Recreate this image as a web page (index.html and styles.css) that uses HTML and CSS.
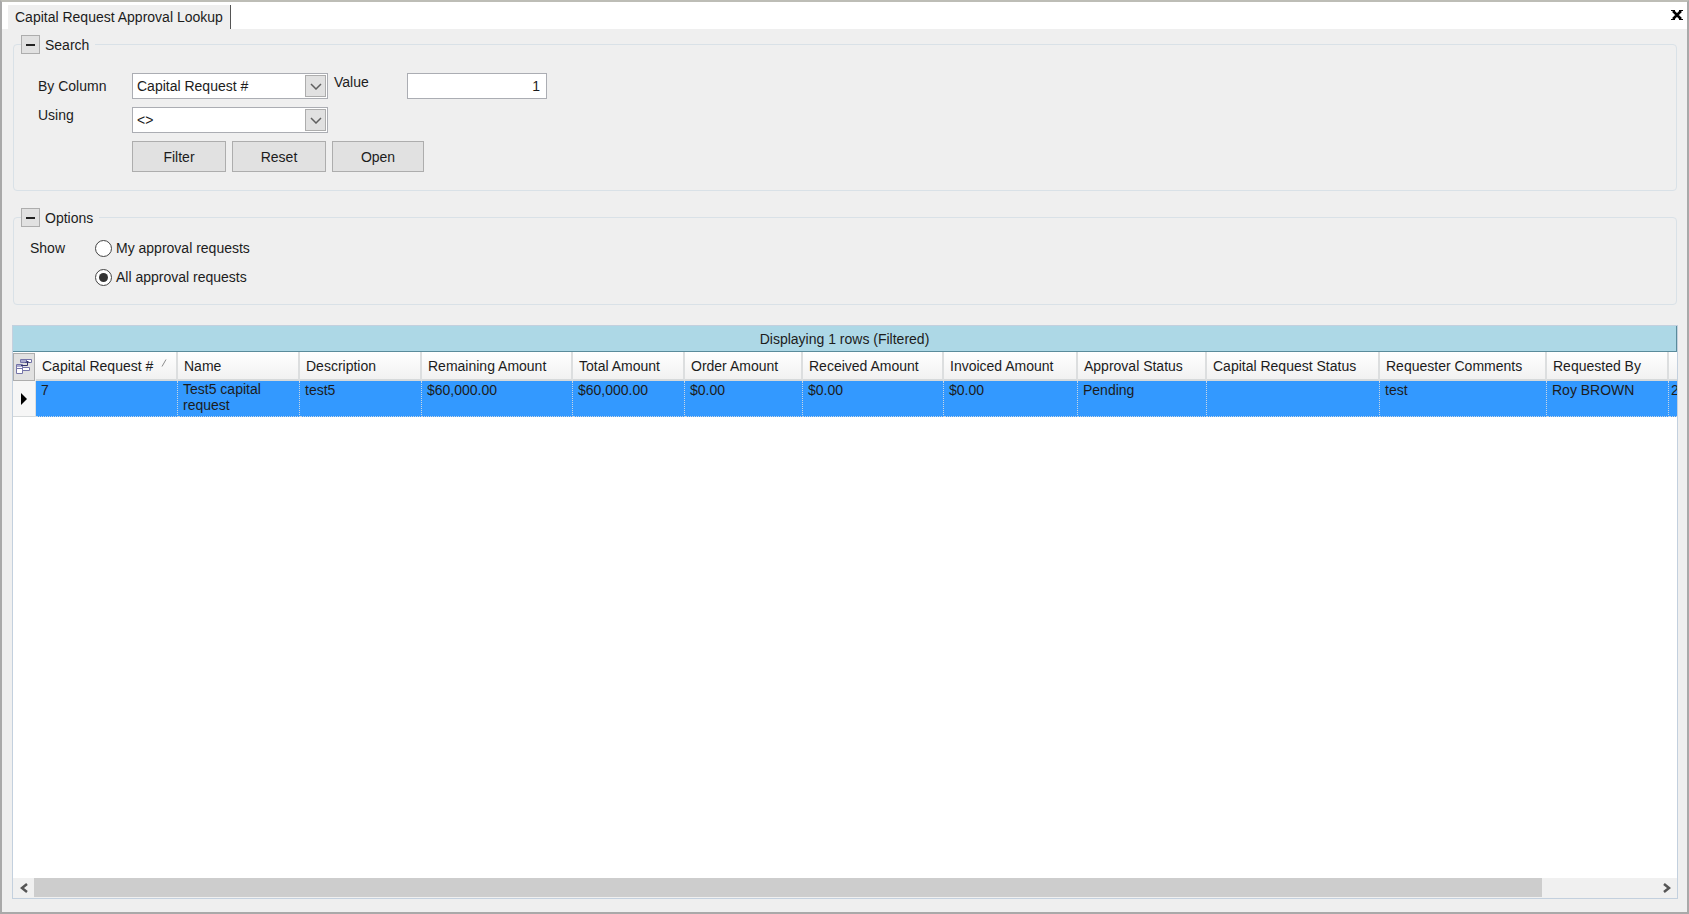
FILE: index.html
```html
<!DOCTYPE html>
<html lang="en">
<head>
<meta charset="utf-8">
<title>Capital Request Approval Lookup</title>
<link rel="stylesheet" href="styles.css">
</head>
<body>
<div class="window">
  <header class="tab-strip">
    <h1 class="tab">Capital Request Approval Lookup</h1>
    <button class="close" type="button" aria-label="Close">
      <svg width="12" height="10" viewBox="0 0 12 10"><path d="M2 1l8 8M10 1L2 9" fill="none" stroke="#000" stroke-width="2.500"/><path d="M0 .5h4M8 .5h4M0 9.500h4M8 9.500h4" stroke="#000"/></svg>
    </button>
  </header>

  <main class="content">
    <fieldset class="group search">
      <legend class="legend"><button class="toggle" type="button" aria-label="Collapse Search"><span class="minus"></span></button>Search</legend>
      <div class="fields">
        <label class="label-mid" for="column">By Column</label>
        <div class="combo">
          <select id="column"><option>Capital Request #</option></select>
          <span class="combo-arrow"><svg width="12" height="7" viewBox="0 0 12 7"><path d="M1 1l5 5 5-5" fill="none" stroke="#606060" stroke-width="1.500"/></svg></span>
        </div>
        <label class="label-top" for="value">Value</label>
        <input class="value" id="value" type="text" value="1">
        <label class="label-top" for="using">Using</label>
        <div class="combo">
          <select id="using"><option>&lt;&gt;</option></select>
          <span class="combo-arrow"><svg width="12" height="7" viewBox="0 0 12 7"><path d="M1 1l5 5 5-5" fill="none" stroke="#606060" stroke-width="1.500"/></svg></span>
        </div>
      </div>
      <div class="actions">
        <button type="button">Filter</button>
        <button type="button">Reset</button>
        <button type="button">Open</button>
      </div>
    </fieldset>

    <fieldset class="group options">
      <legend class="legend"><button class="toggle" type="button" aria-label="Collapse Options"><span class="minus"></span></button>Options</legend>
      <div class="show">
        <span class="show-label" id="show">Show</span>
        <div class="choices" role="radiogroup" aria-labelledby="show">
          <label class="choice"><input type="radio" name="show">My approval requests</label>
          <label class="choice"><input type="radio" name="show" checked>All approval requests</label>
        </div>
      </div>
    </fieldset>

    <section class="grid">
      <h2 class="caption">Displaying 1 rows (Filtered)</h2>
      <div class="viewport">
        <table class="table">
          <colgroup>
            <col class="w-selector"><col class="w-number"><col class="w-name"><col class="w-name"><col class="w-remaining"><col class="w-total"><col class="w-order"><col class="w-received"><col class="w-invoiced"><col class="w-approval"><col class="w-status"><col class="w-comments"><col class="w-by"><col class="w-date">
          </colgroup>
          <thead>
            <tr>
              <th class="chooser">
                <button type="button" aria-label="Choose columns">
                  <svg width="18" height="18" viewBox="0 0 18 18"><g fill="#fff" stroke="#7474a8"><path d="M5.500 1.500h11v3h-11zM11.500 1.500v3"/><path d="M1.500 6.500h6v4h-6zM1.500 10.500h6v5h-6z"/><path d="M7.500 9.500h7v3h-7z"/></g><path d="M6 2h5v2H6zM2 7h5v2H2z" fill="#a9a9cf"/><path d="M6 7.500h6.500V3M10.500 5l2-2 2 2" fill="none" stroke="#33336e" stroke-width="1"/></svg>
                </button>
              </th>
              <th>Capital Request # <svg class="sort" width="6" height="8" viewBox="0 0 6 8"><path d="M1 7.500L5 .5" stroke="#8c8c8c"/></svg></th>
              <th>Name</th>
              <th>Description</th>
              <th>Remaining Amount</th>
              <th>Total Amount</th>
              <th>Order Amount</th>
              <th>Received Amount</th>
              <th>Invoiced Amount</th>
              <th>Approval Status</th>
              <th>Capital Request Status</th>
              <th>Requester Comments</th>
              <th>Requested By</th>
              <th></th>
            </tr>
          </thead>
          <tbody>
            <tr>
              <td class="current"><svg width="6" height="12" viewBox="0 0 6 12"><path d="M0 0l6 6-6 6z" fill="#000"/></svg></td>
              <td>7</td>
              <td class="wrap">Test5 capital request</td>
              <td>test5</td>
              <td>$60,000.00</td>
              <td>$60,000.00</td>
              <td>$0.00</td>
              <td>$0.00</td>
              <td>$0.00</td>
              <td>Pending</td>
              <td></td>
              <td>test</td>
              <td>Roy BROWN</td>
              <td class="date">2</td>
            </tr>
          </tbody>
        </table>
      </div>
      <div class="scrollbar">
        <button type="button" aria-label="Scroll left"><svg width="8" height="10" viewBox="0 0 8 10"><path d="M7 1L2 5l5 4" fill="none" stroke="#555" stroke-width="2.500"/></svg></button>
        <div class="track"><div class="thumb"></div></div>
        <button type="button" aria-label="Scroll right"><svg width="8" height="10" viewBox="0 0 8 10"><path d="M1 1l5 4-5 4" fill="none" stroke="#555" stroke-width="2.500"/></svg></button>
      </div>
    </section>
  </main>
</div>
</body>
</html>
```
FILE: styles.css
```css
* { box-sizing: border-box; }

body {
  margin: 0;
  font: 14px/16px "Liberation Sans", Arial, sans-serif;
  color: #1c1c1c;
}

button, input, select { font: inherit; color: inherit; margin: 0; }

svg { display: block; }

.window {
  display: flex;
  flex-direction: column;
  height: 100vh;
  background: #efefef;
  border: 2px solid #a9a9a9;
  border-top-color: #bdbdb6;
}

.tab-strip {
  display: flex;
  justify-content: space-between;
  align-items: flex-end;
  height: 27px;
  padding-left: 6px;
  background: #fff;
}

.tab {
  margin: 0;
  padding: 4px 7px 4px 7px;
  font-size: 14px;
  font-weight: normal;
  background: #efefef;
  border-right: 1px solid #555;
}

.close {
  padding: 0 4px;
  height: 28px;
  border: 0;
  background: none;
}

.content {
  display: flex;
  flex-direction: column;
  flex: 1;
  min-height: 0;
  padding: 6px 9px 13px 10px;
}

.group {
  margin: 0 1px;
  min-width: 0;
  border: 1px solid #d9e1e7;
  border-radius: 4px;
}

.legend {
  display: flex;
  align-items: center;
  gap: 5px;
  padding: 0 6px 0 0;
  height: 19px;
}

.toggle {
  width: 19px;
  height: 19px;
  padding: 4px;
  background: #e1e1e1;
  border: 1px solid #adadad;
}

.minus { display: block; height: 2px; background: #222; }

.search { padding: 19px 24px 18px 7px; }

.fields {
  display: grid;
  grid-template-columns: 94px 196px 79px 140px;
  row-gap: 8px;
  margin-left: 17px;
}

.label-mid { align-self: center; }
.label-top { align-self: start; }
.fields [for="value"] { padding: 1px 0 0 6px; }

.combo { position: relative; }

.combo select {
  display: block;
  appearance: none;
  width: 100%;
  height: 26px;
  padding: 0 28px 0 4px;
  background: #fff;
  border: 1px solid #abadb3;
  border-radius: 0;
}

.combo-arrow {
  position: absolute;
  top: 2px;
  right: 2px;
  bottom: 2px;
  display: grid;
  place-items: center;
  width: 21px;
  background: #e1e1e1;
  border: 1px solid #adadad;
  pointer-events: none;
}

.value {
  width: 100%;
  height: 26px;
  padding: 0 6px;
  text-align: right;
  background: #fff;
  border: 1px solid #abadb3;
}

.actions { display: flex; gap: 6px; margin: 8px 0 0 111px; }

.actions button {
  width: 94px;
  height: 31px;
  padding: 0;
  background: #e1e1e1;
  border: 1px solid #adadad;
}

.actions button:last-child { width: 92px; }

.options { margin-top: 17px; padding: 11px 24px 17px 7px; }

.show { display: flex; margin-left: 9px; }

.show-label { width: 65px; line-height: 20px; }

.choices { display: flex; flex-direction: column; gap: 9px; }

.choice { display: flex; align-items: center; gap: 4px; height: 20px; }

.choice input {
  appearance: none;
  display: grid;
  place-items: center;
  width: 17px;
  height: 17px;
  background: #fff;
  border: 1px solid #444;
  border-radius: 50%;
}

.choice input:checked::before {
  content: "";
  width: 9px;
  height: 9px;
  border-radius: 50%;
  background: #333;
}

.grid {
  display: flex;
  flex-direction: column;
  flex: 1;
  min-height: 0;
  margin-top: 20px;
  background: #fff;
  border: 1px solid #c3d0de;
}

.caption {
  margin: 0;
  padding: 5px 0 4px;
  font-size: 14px;
  font-weight: normal;
  text-align: center;
  background: #add8e6;
  border-right: 1px solid #5a8b9b;
  border-bottom: 1px solid #5a8b9b;
}

.viewport { flex: 1; overflow: hidden; }

.table {
  table-layout: fixed;
  width: 1702px;
  border-collapse: separate;
  border-spacing: 0;
}

.w-selector { width: 23px; }
.w-number { width: 142px; }
.w-name { width: 122px; }
.w-remaining { width: 151px; }
.w-total { width: 112px; }
.w-order { width: 118px; }
.w-received { width: 141px; }
.w-invoiced { width: 134px; }
.w-approval { width: 129px; }
.w-status { width: 173px; }
.w-comments { width: 167px; }
.w-by { width: 122px; }
.w-date { width: 46px; }

.table th {
  height: 29px;
  padding: 0 0 0 6px;
  font-weight: normal;
  text-align: left;
  white-space: nowrap;
  background: linear-gradient(#fff, #f1f1f1);
  border-right: 2px solid #dcdedf;
  border-bottom: 2px solid #d6d9da;
}

.sort { display: inline-block; margin-left: 4px; vertical-align: 4px; }

.table .chooser { padding: 0; border: 0; }

.chooser button {
  display: grid;
  place-items: center;
  width: 22px;
  height: 28px;
  padding: 0;
  background: #e1e1e1;
  border: 1px solid #adadad;
}

.table td {
  height: 36px;
  padding: 1px 0 0 5px;
  vertical-align: top;
  background: #3399ff;
  border-right: 1px dotted #c9d6e4;
  border-bottom: 1px dotted #c9d6e4;
}

.table .wrap { padding: 0 20px 0 5px; }
.table .date { padding-left: 2px; }

.table .current {
  padding: 0 0 0 8px;
  vertical-align: middle;
  background: #f6f6f6;
  border-right: 1px solid #dcdedf;
  border-bottom: 1px solid #d6d9da;
}

.scrollbar { display: flex; height: 20px; background: #f0f0f0; }

.scrollbar button {
  display: grid;
  place-items: center;
  width: 21px;
  padding: 0;
  border: 0;
  background: none;
}

.track { flex: 1; }
.thumb { width: 93%; height: 19px; background: #cdcdcd; }
```
